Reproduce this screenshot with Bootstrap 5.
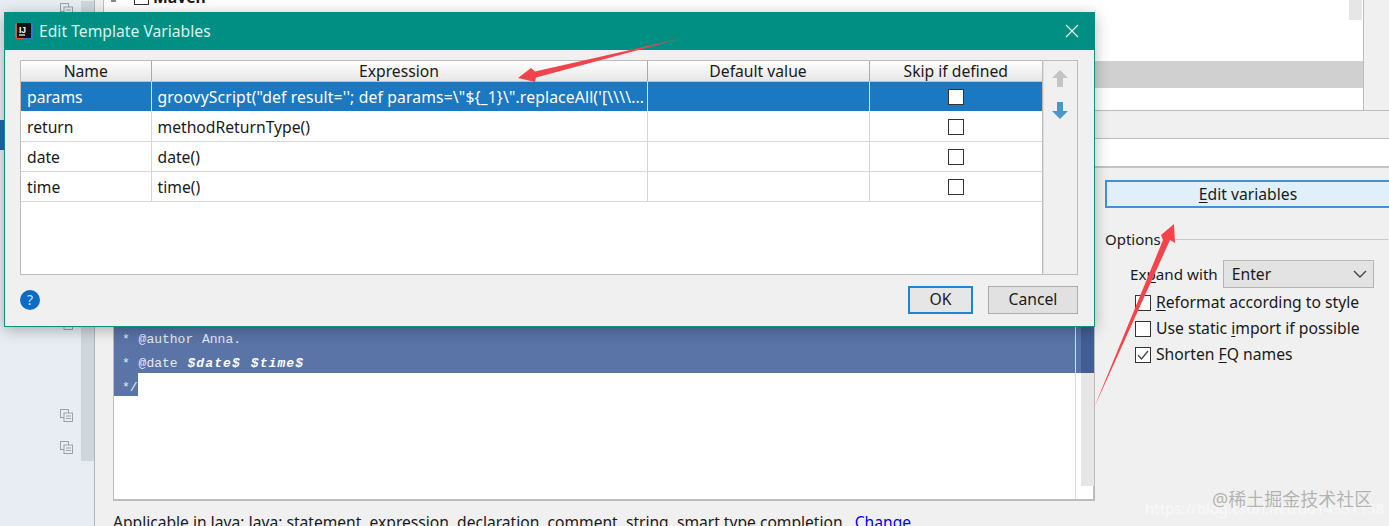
<!DOCTYPE html>
<html lang="en"><head><meta charset="utf-8"><title>Edit Template Variables</title>
<link rel="stylesheet" href="https://cdn.jsdelivr.net/npm/bootstrap@5.3.0/dist/css/bootstrap.min.css">
<style>
html,body{margin:0;height:526px;overflow:hidden}
body{font-family:"Noto Sans","Noto Sans CJK SC",sans-serif;font-size:15.7px;line-height:20px;color:#1a1a1a;background:#f0f0f0}
.desk{position:relative;width:1389px;height:526px;overflow:hidden}
.side{width:95px;flex:none;height:526px;background:#e8edf3;border-right:1px solid #b5b5b5;padding-top:1px;position:relative}
.side-strip{width:13px;height:460px;background:#cfd6dc;margin-left:81px}
.side-mark{position:absolute;left:0;top:120px;width:4px;height:30px;background:#1a6db0}
.copy-ic{position:absolute;left:60px;width:13px;height:13px}
.tree-box{height:110px;margin-left:8px;width:1261px;background:#fff;border-left:1px solid #bdbdbd;border-right:1px solid #bdbdbd;position:relative;overflow:hidden;padding-top:61px}
.tree-sel{height:27px;background:#d0d0d0}
.tree-thumb{position:absolute;right:1px;top:0;width:13px;height:20px;background:#e6e6e6}
.maven{position:absolute;left:30px;top:-13px;display:flex;align-items:center;gap:4px;font-weight:700}
.maven i{display:block;width:15px;height:15px;border:1px solid #333;background:#fff}
.tree-arrow{position:absolute;left:7px;top:-2px;width:5px;height:4px;background:#888}
.rule-a{height:29px;border-top:1px solid #bcbcbc;border-bottom:1px solid #bcbcbc;background:#f0f0f0;flex:none}
.desc-box{height:29px;background:#fff;border-bottom:2px solid #c4c4c4;flex:none}
.lower{flex:1;min-height:0}
.editor-col{width:999px;flex:none;padding:0 0 0 18px}
.editor{height:175px;margin-top:158px;width:982px;background:#fff;border:2px solid #bcbcbc;border-top:0;border-left-width:1px;position:relative;font-family:"Liberation Mono",monospace;font-size:13px;line-height:24px;color:#e4e9f2}
.sel-line{background:#5a74a8;height:24px;padding:2px 0 0 8px;white-space:pre;word-spacing:1px}
.sel-line b{font-style:italic;color:#fff;letter-spacing:1.1px;margin-left:1px}
.sel-tail{height:23px}
.sel-short{width:24px;height:23px;padding-left:8px;background:#5a74a8;line-height:29px;white-space:pre;overflow:hidden}
.margin-line{position:absolute;left:961px;top:0;bottom:0;width:1px;background:#dcdcdc}
.gutter{position:absolute;left:967px;top:0;width:13px;height:160px;background:#e6e6e6}
.gutter-sel{height:47px;background:#425d92}
.applic{margin-top:11px;white-space:nowrap;line-height:20px;font-size:15.6px}
.applic a{color:#0000ee;text-decoration:none;margin-left:4px}
.opt-col{width:294px;flex:none;padding:12px 0 0 11px}
.edit-btn{display:block;width:286px;height:28px;padding:0;font:inherit;color:#1a1a1a;background:#e0f0fa;border:2px solid #3f93d4;border-radius:0;line-height:22px}
u{text-underline-offset:2px}
.opt-title{margin-top:21px;display:flex;align-items:center;gap:12px;height:20px;font-size:15px}
.opt-title hr{flex:1;margin:0;border:0;border-top:1px solid #c8c8c8;opacity:1}
.exp-row{margin:11px 0 0 25px;height:28px;display:flex;align-items:center;gap:5px}
.exp-label{font-size:15.2px}
.fake-sel{width:151px;height:28px;background:#e3e3e3;border:1px solid #b4b4b4;display:flex;align-items:center;justify-content:space-between;padding:0 6px 0 8px}
.chk-row{margin-left:30px;display:flex;align-items:center;gap:5px;height:26px;white-space:nowrap}
.chk-box{width:16px;height:16px;border:1px solid #333;background:#fff;display:flex;flex:none;margin-top:2px}
.chk-list{margin-top:1px}
.dialog{position:absolute;left:4px;top:12px;width:1091px;height:315px;background:#f0f0f0;border:1px solid #0d8f86;box-shadow:0 3px 14px rgba(0,0,0,.28)}
.dlg-title{height:37px;margin:0;background:#008f82;color:#d8f2ee;display:flex;align-items:center;padding:0 15px 2px 10px;gap:6px}
.dlg-body{padding:10px 16px 0 15px}
.vars{width:1023px;height:215px;border:1px solid #bcbcbc;background:#fff;flex:none}
.vars-tb{table-layout:fixed;width:1021px;margin:0;border-collapse:collapse;--bs-table-bg:transparent;color:#1a1a1a}
.vars-tb th,.vars-tb td{padding:2px 6px 0;border:0;border-right:1px solid #d4d4d4;border-bottom:1px solid #d8d8d8;white-space:nowrap;overflow:hidden;box-shadow:none;vertical-align:middle}
.vars-tb th{height:20px;font-weight:400;text-align:center;background:linear-gradient(#fff,#e6e6e6);border-bottom:1px solid #b5c4d0;border-right:1px solid #aaa;line-height:17px}
.vars-tb td{height:30px;background:#fff;color:#1a1a1a}
.vars-tb td.expr-long{letter-spacing:.15px}
.vars-tb tr.on td{background:#1b78c2;color:#fff;border-right-color:#cfe3f3;border-bottom-color:#fff}
.vars-tb th:last-child,.vars-tb td:last-child{border-right:0}
.cell-chk{width:16px;height:16px;border:1px solid #333;background:#fff;margin:0 auto 0 72px}
.updown{width:35px;height:215px;border:1px solid #bcbcbc;border-left:1px solid #ddd;padding:9px 0 0 8px;display:flex;flex-direction:column;gap:15px}
.dlg-foot{padding:11px 16px 0 15px}
.help-dot{width:20px;height:20px;margin-top:4px;border-radius:50%;background:#0a6cc7;color:#cfe4f7;font-size:14px;display:flex;align-items:center;justify-content:center;line-height:1}
.act-btn{height:28px;font:inherit;padding:0 0 3px;border-radius:0;color:#1a1a1a;background:#e1e1e1;border:1px solid #adadad;line-height:20px}
.act-ok{width:65px;border:2px solid #1a86d6;margin-right:15px;background:#e6e6e6}
.act-cancel{width:90px}
.ann{position:absolute;left:0;top:0;pointer-events:none}
.mark-1{position:absolute;left:1212px;top:487px;font-size:18px;line-height:24px;color:rgba(90,90,90,.42);white-space:nowrap}
.mark-2{position:absolute;left:1145px;top:497px;font-size:15px;line-height:22px;color:rgba(255,255,255,.6);white-space:nowrap}
</style></head>
<body>
<div class="desk d-flex">
  <div class="side">
    <div class="side-strip"></div>
    <div class="side-mark"></div>
    <svg class="copy-ic" style="top:3px" viewBox="0 0 13 13" fill="none" stroke="#9aa3aa"><rect x=".5" y=".5" width="8" height="8"/><rect x="4" y="4" width="8.5" height="8.5" fill="#e8edf3"/><path d="M6 7h5M6 9.5h5"/></svg>
    <svg class="copy-ic" style="top:317px" viewBox="0 0 13 13" fill="none" stroke="#9aa3aa"><rect x=".5" y=".5" width="8" height="8"/><rect x="4" y="4" width="8.5" height="8.5" fill="#e8edf3"/><path d="M6 7h5M6 9.5h5"/></svg>
    <svg class="copy-ic" style="top:409px" viewBox="0 0 13 13" fill="none" stroke="#9aa3aa"><rect x=".5" y=".5" width="8" height="8"/><rect x="4" y="4" width="8.5" height="8.5" fill="#e8edf3"/><path d="M6 7h5M6 9.5h5"/></svg>
    <svg class="copy-ic" style="top:441px" viewBox="0 0 13 13" fill="none" stroke="#9aa3aa"><rect x=".5" y=".5" width="8" height="8"/><rect x="4" y="4" width="8.5" height="8.5" fill="#e8edf3"/><path d="M6 7h5M6 9.5h5"/></svg>
  </div>
  <div class="flex-grow-1 d-flex flex-column" style="min-width:0">
    <div class="tree-box">
      <div class="tree-arrow"></div>
      <div class="maven"><i></i><span>Maven</span></div>
      <div class="tree-sel"></div>
      <div class="tree-thumb"></div>
    </div>
    <div class="rule-a"></div>
    <div class="desc-box"></div>
    <div class="lower d-flex">
      <div class="editor-col">
        <div class="editor">
          <div class="sel-line">* @author Anna.</div>
          <div class="sel-line sel-tail">* @date <b>$date$ $time$</b></div>
          <div class="sel-short">*/</div>
          <div class="margin-line"></div>
          <div class="gutter"><div class="gutter-sel"></div></div>
        </div>
        <div class="applic">Applicable in Java; Java: statement, expression, declaration, comment, string, smart type completion. <a href="#">Change</a></div>
      </div>
      <div class="opt-col">
        <button class="edit-btn" type="button"><u>E</u>dit variables</button>
        <div class="opt-title"><span>Options</span><hr></div>
        <div class="exp-row"><span class="exp-label">Ex<u>p</u>and with</span><div class="fake-sel"><span>Enter</span><svg width="14" height="8" viewBox="0 0 14 8" fill="none" stroke="#444" stroke-width="1.4"><path d="M1 1l6 6 6-6"/></svg></div></div>
        <div class="chk-list">
          <div class="chk-row"><span class="chk-box"></span><span><u>R</u>eformat according to style</span></div>
          <div class="chk-row"><span class="chk-box"></span><span>Use static <u>i</u>mport if possible</span></div>
          <div class="chk-row"><span class="chk-box"><svg width="14" height="14" viewBox="0 0 14 14" fill="none" stroke="#444" stroke-width="1.2"><path d="M2 7l3.5 4L12 3"/></svg></span><span>Shorten <u>F</u>Q names</span></div>
        </div>
      </div>
    </div>
  </div>

  <div class="mark-2">https://blog.csdn.net/u014351158</div>
  <div class="mark-1">@稀土掘金技术社区</div>

  <div class="dialog">
    <div class="dlg-title">
      <svg width="18" height="18" viewBox="0 0 18 18"><rect x="0" y="1" width="18" height="16" rx="2" fill="#d9573d"/><rect x="9" y="1" width="9" height="16" fill="#2b7ad8"/><rect x="2" y="1" width="14" height="15" fill="#111"/><path d="M4 13h6" stroke="#fff" stroke-width="1.2"/><text x="4" y="10.500" font-family="Liberation Sans" font-size="8.500" font-weight="700" fill="#fff">IJ</text></svg>
      <span class="flex-grow-1">Edit Template Variables</span>
      <svg width="14" height="14" viewBox="0 0 14 14" stroke="#e6f6f4" stroke-width="1.2"><path d="M1 1l12 12M13 1L1 13"/></svg>
    </div>
    <div class="dlg-body d-flex">
      <div class="vars">
        <table class="table vars-tb">
          <colgroup><col style="width:130px"><col style="width:496px"><col style="width:222px"><col style="width:173px"></colgroup>
          <thead><tr><th>Name</th><th>Expression</th><th>Default value</th><th>Skip if defined</th></tr></thead>
          <tbody>
            <tr class="on"><td>params</td><td class="expr-long">groovyScript("def result=''; def params=\"${_1}\".replaceAll('[\\\\...</td><td></td><td><div class="cell-chk"></div></td></tr>
            <tr><td>return</td><td>methodReturnType()</td><td></td><td><div class="cell-chk"></div></td></tr>
            <tr><td>date</td><td>date()</td><td></td><td><div class="cell-chk"></div></td></tr>
            <tr><td>time</td><td>time()</td><td></td><td><div class="cell-chk"></div></td></tr>
          </tbody>
        </table>
      </div>
      <div class="updown">
        <svg width="16" height="17" viewBox="0 0 16 17" fill="#c4c4c4"><path d="M8 0l8 8h-5v9H5V8H0z"/></svg>
        <svg width="16" height="17" viewBox="0 0 16 17" fill="#4a97c8"><path d="M8 17L0 9h5V0h6v9h5z"/></svg>
      </div>
    </div>
    <div class="dlg-foot d-flex align-items-start">
      <div class="help-dot">?</div>
      <div class="flex-grow-1"></div>
      <button class="btn act-btn act-ok" type="button">OK</button>
      <button class="btn act-btn act-cancel" type="button">Cancel</button>
    </div>
  </div>

  <svg class="ann" width="1389" height="526" viewBox="0 0 1389 526">
    <path d="M683 38L535 71.500L531 68L518 78L535 82L536 77.500Z" fill="#f0444c"/>
    <path d="M1094 408L1163 240L1161 235L1174 224L1175 243L1170 240Z" fill="#f5434a"/>
  </svg>
</div>
<script src="https://cdn.jsdelivr.net/npm/bootstrap@5.3.0/dist/js/bootstrap.bundle.min.js"></script>
</body></html>
